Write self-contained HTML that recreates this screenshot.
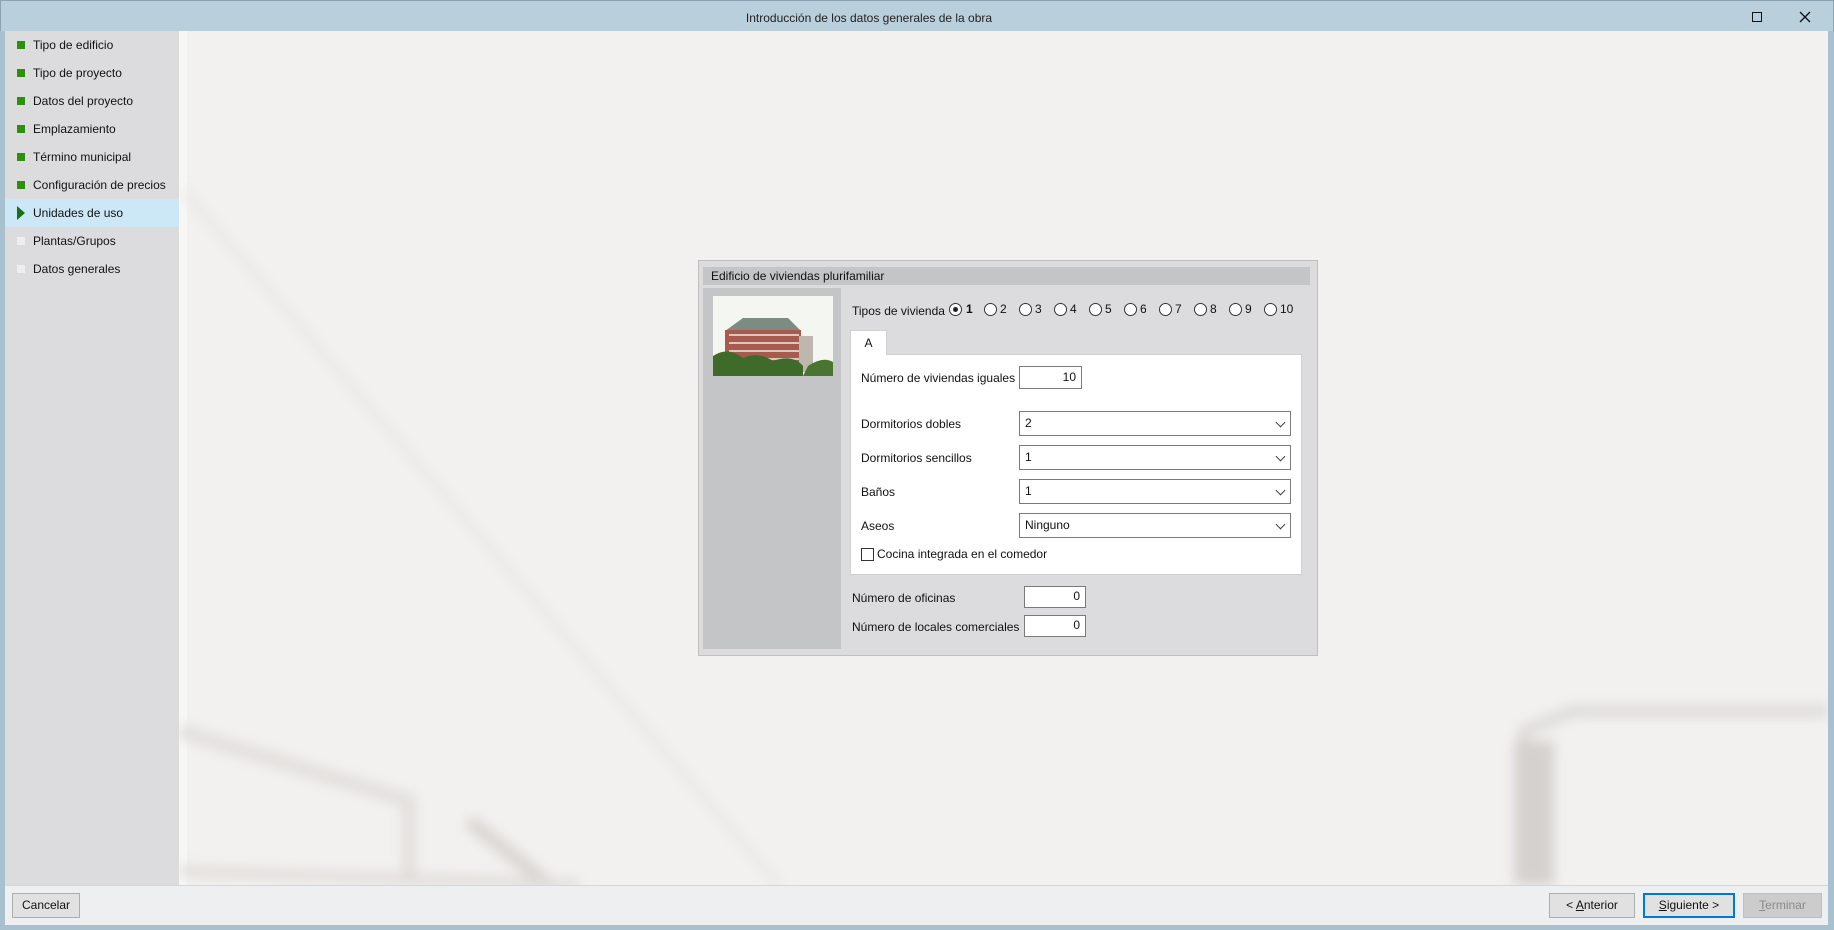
<!DOCTYPE html>
<html><head><meta charset="utf-8"><style>
*{box-sizing:border-box;margin:0;padding:0}
body{width:1834px;height:930px;position:relative;overflow:hidden;background:#a9c0cf;font-family:"Liberation Sans",sans-serif;font-size:12px;color:#111}
.a{position:absolute}
.title{left:0;top:0;width:1834px;height:31px;background:#b9cfdb;border:1px solid #8aa2b2;border-bottom:none}
.side{left:5px;top:31px;width:174px;height:854px;background:#dcdcde}
.item{position:absolute;left:0;width:174px;height:28px;line-height:28px;padding-left:28px;font-size:12px}
.sq{position:absolute;left:12px;top:10px;width:8px;height:8px;background:#2f8f0f}
.content{left:179px;top:31px;width:1649px;height:854px;background:#f2f1ef;overflow:hidden}
.footer{left:5px;top:885px;width:1823px;height:40px;background:#eeeff0;border-top:1px solid #d4d6d8}
.btn{position:absolute;height:25px;border:1px solid #adadad;background:#e1e1e1;text-align:center;line-height:23px;font-size:12px}
.inp{position:absolute;background:#fff;border:1px solid #7a7a7a}
.lbl{position:absolute;font-size:12px;line-height:14px}
.rad{position:absolute;top:303px;width:13px;height:13px;border:1px solid #333;border-radius:50%;background:#fff}
.rl{position:absolute;top:302px;font-size:12px}
.chev{position:absolute;right:6px;top:7px;width:7px;height:7px;border-right:1px solid #444;border-bottom:1px solid #444;transform:rotate(45deg)}
</style></head><body>
<div class="a title"></div>
<div class="a" style="left:0;top:11px;width:1738px;text-align:center;font-size:12px;color:#222">Introducción de los datos generales de la obra</div>
<div class="a" style="left:1752px;top:12px;width:10px;height:10px;border:1.5px solid #111"></div>
<svg class="a" style="left:1799px;top:11px" width="12" height="12"><path d="M1 1L11 11M11 1L1 11" stroke="#111" stroke-width="1.3"/></svg>
<div class="a side">
<div class="item" style="top:0"><span class="sq"></span>Tipo de edificio</div>
<div class="item" style="top:28px"><span class="sq"></span>Tipo de proyecto</div>
<div class="item" style="top:56px"><span class="sq"></span>Datos del proyecto</div>
<div class="item" style="top:84px"><span class="sq"></span>Emplazamiento</div>
<div class="item" style="top:112px"><span class="sq"></span>Término municipal</div>
<div class="item" style="top:140px"><span class="sq"></span>Configuración de precios</div>
<div class="item" style="top:168px;background:#cce8f6"><svg style="position:absolute;left:12px;top:7px" width="8" height="14"><path d="M0 0L8 7L0 14Z" fill="#1a6e1a"/></svg>Unidades de uso</div>
<div class="item" style="top:196px"><span class="sq" style="background:#eee"></span>Plantas/Grupos</div>
<div class="item" style="top:224px"><span class="sq" style="background:#eee"></span>Datos generales</div>
</div>
<div class="a content">
<div class="a" style="left:0;top:0;width:8px;height:854px;background:#f7f7f6"></div>
<svg class="a" style="left:0;top:0" width="1649" height="854"><defs><filter id="b"><feGaussianBlur stdDeviation="6"/></filter></defs>
<g filter="url(#b)" fill="none" stroke-linecap="butt">
<path d="M5 160L600 854" stroke="#e9e8e6" stroke-width="8"/>
<path d="M0 700L230 770L230 854" stroke="#e2dfdc" stroke-width="14"/>
<path d="M290 790L370 854" stroke="#d9d5d1" stroke-width="14"/>
<path d="M0 840L400 854" stroke="#e0dcd8" stroke-width="10"/>
<path d="M1345 854L1345 700L1395 680L1649 680" stroke="#dedbd8" stroke-width="12"/>
<path d="M1355 854L1355 710" stroke="#d5d1ce" stroke-width="40"/>
</g></svg>
</div>
<!-- dialog panel -->
<div class="a" style="left:698px;top:260px;width:620px;height:396px;background:#dcdcde;border:1px solid #c0c0c0"></div>
<div class="a" style="left:703px;top:267px;width:607px;height:18px;background:#c4c5c7;padding-left:8px;line-height:18px">Edificio de viviendas plurifamiliar</div>
<div class="a" style="left:703px;top:288px;width:138px;height:361px;background:#c4c5c7"></div>
<svg class="a" style="left:713px;top:296px" width="120" height="80">
<rect width="120" height="80" fill="#f4f6f2"/>
<path d="M12 35L30 22L75 22L88 35Z" fill="#7c8c80"/>
<rect x="12" y="34" width="76" height="38" fill="#a85a4c"/>
<g fill="#d8c8c0"><rect x="16" y="38" width="70" height="2"/><rect x="16" y="46" width="70" height="2"/><rect x="16" y="54" width="70" height="2"/><rect x="16" y="62" width="70" height="2"/></g>
<rect x="86" y="40" width="14" height="36" fill="#bdb7b0"/>
<path d="M0 60Q15 50 30 62Q45 55 60 65Q80 58 90 70L90 80L0 80Z" fill="#3e6a2a"/>
<path d="M95 70Q110 60 120 66L120 80L90 80Z" fill="#4a7530"/>
</svg>
<div class="lbl" style="left:852px;top:304px">Tipos de vivienda</div>
<div class="rad" style="left:949px"><div style="position:absolute;left:3px;top:3px;width:5px;height:5px;border-radius:50%;background:#222"></div></div>
<div class="rl" style="left:966px;font-weight:bold">1</div>
<div class="rad" style="left:984px"></div><div class="rl" style="left:1000px">2</div>
<div class="rad" style="left:1019px"></div><div class="rl" style="left:1035px">3</div>
<div class="rad" style="left:1054px"></div><div class="rl" style="left:1070px">4</div>
<div class="rad" style="left:1089px"></div><div class="rl" style="left:1105px">5</div>
<div class="rad" style="left:1124px"></div><div class="rl" style="left:1140px">6</div>
<div class="rad" style="left:1159px"></div><div class="rl" style="left:1175px">7</div>
<div class="rad" style="left:1194px"></div><div class="rl" style="left:1210px">8</div>
<div class="rad" style="left:1229px"></div><div class="rl" style="left:1245px">9</div>
<div class="rad" style="left:1264px"></div><div class="rl" style="left:1280px">10</div>
<div class="a" style="left:850px;top:354px;width:452px;height:221px;background:#fff;border:1px solid #d0d0d0"></div>
<div class="a" style="left:850px;top:330px;width:37px;height:25px;background:#fff;border:1px solid #d0d0d0;border-bottom:none;text-align:center;line-height:24px">A</div>
<div class="lbl" style="left:861px;top:371px">Número de viviendas iguales</div>
<div class="inp" style="left:1019px;top:366px;width:63px;height:23px;text-align:right;padding-right:5px;line-height:20px">10</div>
<div class="lbl" style="left:861px;top:417px">Dormitorios dobles</div>
<div class="inp" style="left:1019px;top:411px;width:272px;height:25px;padding-left:5px;line-height:22px">2<span class="chev"></span></div>
<div class="lbl" style="left:861px;top:451px">Dormitorios sencillos</div>
<div class="inp" style="left:1019px;top:445px;width:272px;height:25px;padding-left:5px;line-height:22px">1<span class="chev"></span></div>
<div class="lbl" style="left:861px;top:485px">Baños</div>
<div class="inp" style="left:1019px;top:479px;width:272px;height:25px;padding-left:5px;line-height:22px">1<span class="chev"></span></div>
<div class="lbl" style="left:861px;top:519px">Aseos</div>
<div class="inp" style="left:1019px;top:513px;width:272px;height:25px;padding-left:5px;line-height:22px">Ninguno<span class="chev"></span></div>
<div class="a" style="left:861px;top:548px;width:13px;height:13px;border:1px solid #333;background:#fff"></div>
<div class="lbl" style="left:877px;top:547px">Cocina integrada en el comedor</div>
<div class="lbl" style="left:852px;top:591px">Número de oficinas</div>
<div class="inp" style="left:1024px;top:586px;width:62px;height:22px;text-align:right;padding-right:5px;line-height:19px">0</div>
<div class="lbl" style="left:852px;top:620px">Número de locales comerciales</div>
<div class="inp" style="left:1024px;top:615px;width:62px;height:22px;text-align:right;padding-right:5px;line-height:19px">0</div>
<!-- footer -->
<div class="a footer"></div>
<div class="btn" style="left:12px;top:893px;width:68px">Cancelar</div>
<div class="btn" style="left:1549px;top:893px;width:86px">&lt; <u>A</u>nterior</div>
<div class="btn" style="left:1643px;top:893px;width:92px;border:2px solid #0078d7;line-height:21px"><u>S</u>iguiente &gt;</div>
<div class="btn" style="left:1743px;top:893px;width:79px;background:#cccccc;border-color:#bfbfbf;color:#8a8a8a"><u>T</u>erminar</div>
</body></html>
